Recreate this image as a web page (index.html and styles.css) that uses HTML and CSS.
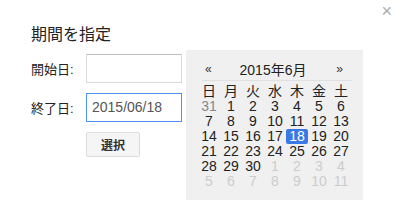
FILE: index.html
```html
<!DOCTYPE html>
<html lang="ja">
<head>
<meta charset="utf-8">
<link rel="stylesheet" href="styles.css">
</head>
<body>
<div class="dialog">
  <span class="close">×</span>
  <h1 class="title">期間を指定</h1>
  <div class="row">
    <label class="label">開始日:</label>
    <div class="input"></div>
  </div>
  <div class="row">
    <label class="label">終了日:</label>
    <div class="input focus">2015/06/18</div>
  </div>
  <div class="row">
    <span class="label"></span>
    <button class="btn">選択</button>
  </div>
  <div class="picker">
    <div class="head">
      <span class="nav">«</span>
      <span class="month">2015年6月</span>
      <span class="nav">»</span>
    </div>
    <div class="grid">
      <span class="dow">日</span><span class="dow">月</span><span class="dow">火</span><span class="dow">水</span><span class="dow">木</span><span class="dow">金</span><span class="dow">土</span>
      <span class="prev">31</span><span>1</span><span>2</span><span>3</span><span>4</span><span>5</span><span>6</span>
      <span>7</span><span>8</span><span>9</span><span>10</span><span>11</span><span>12</span><span>13</span>
      <span>14</span><span>15</span><span>16</span><span>17</span><span class="sel">18</span><span>19</span><span>20</span>
      <span>21</span><span>22</span><span>23</span><span>24</span><span>25</span><span>26</span><span>27</span>
      <span>28</span><span>29</span><span>30</span><span class="next">1</span><span class="next">2</span><span class="next">3</span><span class="next">4</span>
      <span class="next">5</span><span class="next">6</span><span class="next">7</span><span class="next">8</span><span class="next">9</span><span class="next">10</span><span class="next">11</span>
    </div>
  </div>
</div>
</body>
</html>
```
FILE: styles.css
```css
html, body {
  margin: 0;
  padding: 0;
  background: #fff;
}
body {
  width: 402px;
  height: 220px;
  overflow: hidden;
  font-family: "Liberation Sans", "Noto Sans CJK JP", sans-serif;
  color: #222;
}
.dialog {
  position: relative;
  padding: 24px 0 0 31px;
  height: 196px;
}
.close {
  position: absolute;
  right: 10px;
  top: 2px;
  font-size: 18px;
  color: #aaa;
  line-height: 18px;
}
.title {
  margin: 0 0 8px 0;
  font-size: 16px;
  font-weight: normal;
  line-height: 22px;
  height: 22px;
  color: #222;
}
.row {
  display: flex;
  align-items: center;
  margin-bottom: 10px;
}
.label {
  width: 55px;
  font-size: 13px;
  color: #222;
}
.input {
  box-sizing: border-box;
  width: 96px;
  height: 29px;
  border: 1px solid #d9d9d9;
  border-top-color: #c0c0c0;
  background: #fff;
  font-size: 14px;
  line-height: 27px;
  padding-left: 5px;
  color: #555;
}
.input.focus {
  border-color: #4d90fe;
}
.btn {
  box-sizing: border-box;
  width: 54px;
  height: 25px;
  margin: 0;
  border: 1px solid #dcdcdc;
  border-radius: 2px;
  background: #f5f5f5;
  font-family: "Liberation Sans", "Noto Sans CJK JP", sans-serif;
  font-size: 12px;
  font-weight: bold;
  color: #333;
  padding: 0;
}
.picker {
  position: absolute;
  left: 186px;
  top: 50px;
  width: 177px;
  height: 150px;
  background: #f0f0f0;
  box-sizing: border-box;
  padding: 8px 0 0 12px;
}
.head {
  display: flex;
  justify-content: space-between;
  align-items: center;
  width: 150px;
  box-sizing: border-box;
  height: 23px;
  margin-left: 4px;
  border-bottom: 1px solid #e0e0e0;
  padding: 0 9px 1px 3px;
  font-size: 14px;
  color: #222;
}
.nav {
  font-size: 12px;
  color: #333;
}
.month {
  font-size: 14px;
  margin-right: 2px;
}
.grid {
  display: grid;
  grid-template-columns: repeat(7, 22px);
  grid-auto-rows: 15px;
  margin-top: 3px;
  font-size: 14px;
  line-height: 15px;
  text-align: center;
  color: #222;
}
.grid .dow {
  font-size: 14px;
}
.grid .prev {
  color: #888;
}
.grid .next {
  color: #ccc;
}
.grid .sel {
  background: #3b78e7;
  color: #fff;
  border-radius: 2px;
}
```
